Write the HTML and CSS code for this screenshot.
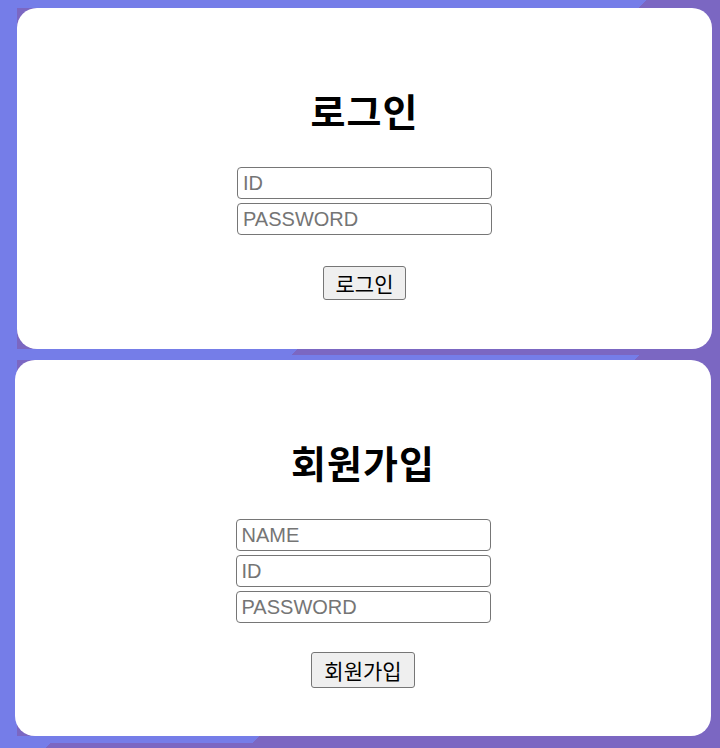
FILE: index.html
```html
<!DOCTYPE html>
<html lang="ko">
<head>
  <meta charset="UTF-8" />
  <meta name="viewport" content="width=device-width, initial-scale=1.0"/>
  <title>로그인 / 회원가입</title>
  <link rel="stylesheet" href="styles.css">
</head>
<body>
  <div class="page">
    <div class="card card-login">
      <h1>로그인</h1>
      <form class="auth-form">
        <input type="text" placeholder="ID" />
        <input type="password" placeholder="PASSWORD" />
        <button type="button">로그인</button>
      </form>
    </div>

    <div class="card card-join">
      <h1>회원가입</h1>
      <form class="auth-form">
        <input type="text" placeholder="NAME" />
        <input type="text" placeholder="ID" />
        <input type="password" placeholder="PASSWORD" />
        <button type="button">회원가입</button>
      </form>
    </div>
  </div>
</body>
</html>
```

FILE: styles.css
```css
:root {
  --blue: #757de8;
  --purple: #7b67c2;
  --white: #ffffff;
  --border: #767676;
  --radius: 20px;
}

* {
  box-sizing: border-box;
  margin: 0;
  padding: 0;
}

html, body {
  height: 100%;
}

/* two flat tones with hard 45deg edges between the cards */
body {
  font-family: "Liberation Sans", "Noto Sans CJK KR", sans-serif;
  background-color: var(--purple);
  background-image:
    linear-gradient(var(--blue), var(--blue)),
    linear-gradient(135deg, var(--blue) 456.8px, transparent 456.8px),
    linear-gradient(135deg, var(--blue) 210.7px, transparent 210.7px),
    linear-gradient(135deg, var(--blue) 452.5px, transparent 452.5px),
    linear-gradient(135deg, var(--blue) 183.8px, transparent 183.8px),
    linear-gradient(135deg, var(--blue) 35.4px, transparent 35.4px);
  background-size:
    17px 100%,
    720px 8px,
    720px 6px,
    720px 5px,
    720px 7px,
    720px 5px;
  background-position:
    0 0,
    0 0,
    0 349px,
    0 355px,
    0 736px,
    0 743px;
  background-repeat: no-repeat;
  overflow: hidden;
}

.page {
  display: flex;
  flex-direction: column;
}

.card {
  background-color: var(--white);
  border-radius: var(--radius);
  display: flex;
  flex-direction: column;
  align-items: center;
}

.card-login {
  width: 695px;
  height: 341px;
  margin: 8px 0 0 17px;
}

.card-join {
  width: 696px;
  height: 376px;
  margin: 11px 0 0 15px;
}

h1 {
  font-family: "Noto Sans CJK KR", sans-serif;
  font-size: 38px;
  font-weight: bold;
  letter-spacing: 1px;
  line-height: 44px;
  margin: 80px 0 35px;
  color: #000;
}

.auth-form {
  display: flex;
  flex-direction: column;
  align-items: center;
  gap: 4px;
}

input {
  width: 255px;
  height: 32px;
  padding: 0 5px;
  font-family: "Liberation Sans", sans-serif;
  font-size: 20px;
  color: #000;
  border: 1px solid var(--border);
  border-radius: 4px;
  background-color: var(--white);
}

input::placeholder {
  color: #757575;
}

button {
  margin-top: 27px;
  height: 34px;
  padding: 0 12px;
  font-family: "Noto Sans CJK KR", sans-serif;
  font-size: 21px;
  color: #000;
  background-color: #efefef;
  border: 1px solid var(--border);
  border-radius: 3px;
}

.card-join button {
  margin-top: 25px;
  height: 36px;
}
```
